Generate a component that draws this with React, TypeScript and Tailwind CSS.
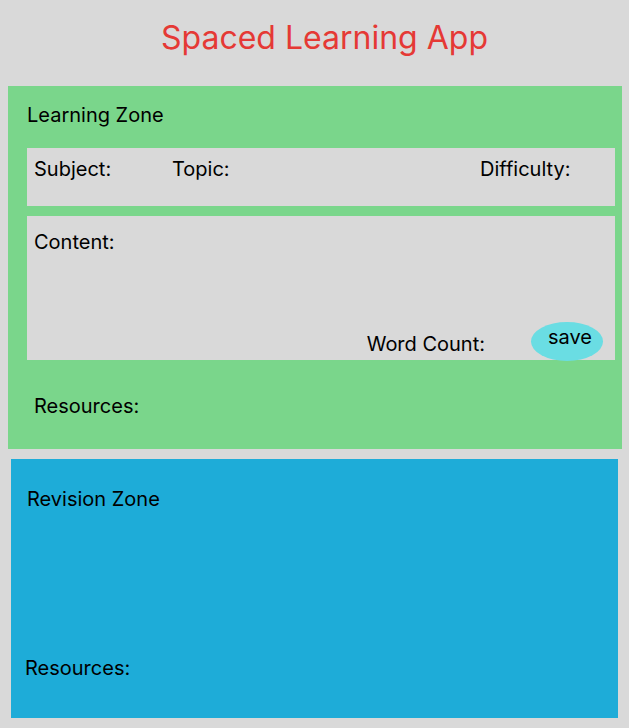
export default function App() {
  return (
    <div className="min-h-[728px] w-[629px] bg-[#d9d9d9] font-['Inter',sans-serif] text-black">
      <h1 className="pt-[18px] pl-[20px] text-center text-[32px] leading-[40px] font-normal text-[#e53935]">
        Spaced Learning App
      </h1>

      {/* learning zone */}
      <section className="mt-[28px] ml-[8px] mr-[7px] bg-[#7ad68b] pt-[17px] pr-[7px] pb-[31px] pl-[19px] text-[20px] leading-[24px]">
        <h2>Learning Zone</h2>
        <div className="mt-[21px] flex h-[58px] bg-[#d9d9d9] pt-[9px] pl-[7px]">
          <span className="w-[138px]">Subject:</span>
          <span className="flex-1">Topic:</span>
          <span className="w-[135px]">Difficulty:</span>
        </div>
        <div className="mt-[10px] flex h-[144px] flex-col bg-[#d9d9d9] pt-[14px] pl-[7px]">
          <span>Content:</span>
          <div className="mt-auto -mb-px flex items-end justify-end pr-[12px]">
            <span className="mb-[5px]">Word Count:</span>
            <button
              type="button"
              className="ml-[46px] flex h-[39px] w-[72px] items-start justify-center rounded-[50%] bg-[#6adde3] pt-[3px] pl-[6px]"
            >
              save
            </button>
          </div>
        </div>
        <p className="mt-[34px] pl-[7px]">Resources:</p>
      </section>

      {/* revision zone */}
      <section className="mt-[10px] ml-[11px] flex h-[259px] w-[607px] flex-col justify-between bg-[#1eacd8] pt-[28px] pb-[38px] text-[20px] leading-[24px]">
        <h2 className="pl-[16px]">Revision Zone</h2>
        <p className="pl-[14px]">Resources:</p>
      </section>
    </div>
  );
}
